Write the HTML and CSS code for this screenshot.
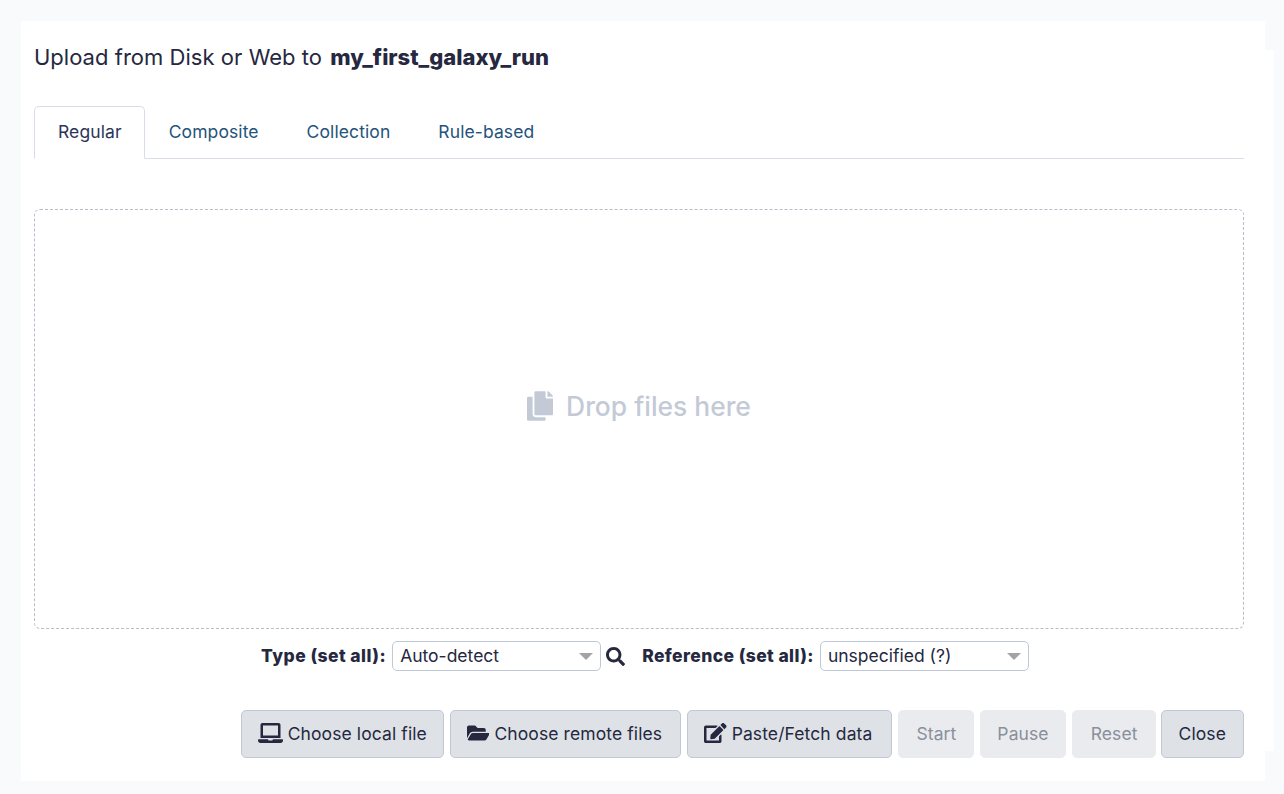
FILE: index.html
```html
<!DOCTYPE html>
<html lang="en">
<head>
<meta charset="utf-8">
<title>Upload from Disk or Web</title>
<link rel="stylesheet" href="styles.css">
</head>
<body>
<main class="panel">
  <h1 class="title">Upload from Disk or Web to <b>my_first_galaxy_run</b></h1>
  <nav class="tabs">
    <a class="tab active">Regular</a>
    <a class="tab">Composite</a>
    <a class="tab">Collection</a>
    <a class="tab">Rule-based</a>
  </nav>
  <section class="drop">
    <svg class="drop-icon" viewBox="0 0 448 512"><path d="M320 448v40c0 13.255-10.745 24-24 24H24c-13.255 0-24-10.745-24-24V120c0-13.255 10.745-24 24-24h72v296c0 30.879 25.121 56 56 56h168zm0-344V0H152c-13.255 0-24 10.745-24 24v368c0 13.255 10.745 24 24 24h272c13.255 0 24-10.745 24-24V128H344c-13.2 0-24-10.8-24-24zm120.971-31.029L375.029 7.029A24 24 0 0 0 358.059 0H352v96h96v-6.059a24 24 0 0 0-7.029-16.97z"/></svg>
    <span>Drop files here</span>
  </section>
  <div class="settings">
    <label class="set-label">Type (set all):</label>
    <div class="select"><span>Auto-detect</span><i class="caret"></i></div>
    <svg class="search" viewBox="0 0 512 512"><path d="M505 442.7L405.3 343c-4.5-4.5-10.6-7-17-7H372c27.6-35.3 44-79.7 44-128C416 93.1 322.9 0 208 0S0 93.1 0 208s93.1 208 208 208c48.3 0 92.7-16.4 128-44v16.3c0 6.4 2.5 12.5 7 17l99.7 99.7c9.4 9.4 24.6 9.4 33.9 0l28.3-28.3c9.4-9.4 9.4-24.6.1-34zM208 336c-70.7 0-128-57.2-128-128 0-70.7 57.2-128 128-128 70.7 0 128 57.2 128 128 0 70.7-57.2 128-128 128z"/></svg>
    <label class="set-label ref">Reference (set all):</label>
    <div class="select"><span>unspecified (?)</span><i class="caret"></i></div>
  </div>
  <div class="actions">
    <button class="btn btn-local" type="button"><svg class="ico" viewBox="0 0 640 512"><path d="M624 416H381.54c-.74 19.81-14.71 32-32.74 32H288c-18.69 0-33.02-17.47-32.77-32H16c-8.8 0-16 7.2-16 16v16c0 35.2 28.8 64 64 64h512c35.2 0 64-28.8 64-64v-16c0-8.8-7.2-16-16-16zM576 48c0-26.4-21.6-48-48-48H112C85.6 0 64 21.6 64 48v336h512V48zm-64 272H128V64h384v256z"/></svg>Choose local file</button>
    <button class="btn btn-remote" type="button"><svg class="ico" viewBox="0 0 576 512"><path d="M572.694 292.093L500.27 416.248A63.997 63.997 0 0 1 444.989 448H45.025c-18.523 0-30.064-20.093-20.731-36.093l72.424-124.155A64 64 0 0 1 152 256h399.964c18.523 0 30.064 20.093 20.73 36.093zM152 224h328v-48c0-26.51-21.49-48-48-48H272l-64-64H48C21.49 64 0 85.49 0 112v278.046l69.077-118.418C86.214 242.25 117.989 224 152 224z"/></svg>Choose remote files</button>
    <button class="btn btn-paste" type="button"><svg class="ico" viewBox="0 0 576 512"><path d="M402.6 83.2l90.2 90.2c3.8 3.8 3.8 10 0 13.8L274.4 405.6l-92.8 10.3c-12.4 1.4-22.9-9.1-21.5-21.5l10.3-92.8L388.8 83.2c3.8-3.8 10-3.8 13.8 0zm162-22.9l-48.8-48.8c-15.2-15.2-39.9-15.2-55.2 0l-35.4 35.4c-3.8 3.8-3.8 10 0 13.8l90.2 90.2c3.8 3.8 10 3.8 13.8 0l35.4-35.4c15.2-15.3 15.2-40 0-55.2zM384 346.2V448H64V128h229.8c3.2 0 6.2-1.3 8.5-3.5l40-40c7.6-7.6 2.2-20.5-8.5-20.5H48C21.5 64 0 85.5 0 112v352c0 26.5 21.5 48 48 48h352c26.5 0 48-21.5 48-48V306.2c0-10.7-12.9-16-20.5-8.5l-40 40c-2.2 2.3-3.5 5.3-3.5 8.5z"/></svg>Paste/Fetch data</button>
    <button class="btn plain disabled" type="button">Start</button>
    <button class="btn plain disabled btn-pause" type="button">Pause</button>
    <button class="btn plain disabled btn-reset" type="button">Reset</button>
    <button class="btn plain" type="button">Close</button>
  </div>
</main>
</body>
</html>
```
FILE: styles.css
```css
* { box-sizing: border-box; }
html, body { margin: 0; height: 100%; }
body {
  background: #f8fafc;
  font-family: Inter, "Liberation Sans", sans-serif;
  font-size: 17.5px;
  color: #25283f;
  overflow: hidden;
}
.panel {
  position: relative;
  width: 1244px;
  height: 760px;
  margin: 21px 0 0 21px;
  padding: 21px 21px 0 13px;
  background: #fff;
  display: flex;
  flex-direction: column;
}
.panel::after {
  content: "";
  position: absolute;
  left: 100%;
  top: 29px;
  width: 9px;
  height: 701px;
  background: #fff;
}
.title {
  margin: 0;
  font-size: 22px;
  font-weight: 400;
  line-height: 30px;
  height: 30px;
  word-spacing: 0.15px;
}
.title b { font-weight: 800; margin-left: 2px; }
.tabs {
  display: flex;
  margin-top: 34px;
  height: 53px;
  border-bottom: 1px solid #d8dee8;
}
.tab {
  height: 53px;
  padding: 0 23px;
  line-height: 50px;
  letter-spacing: 0.1px;
  color: #25537b;
  border: 1px solid transparent;
  border-radius: 5px 5px 0 0;
}
.tab.active {
  padding-right: 22px;
  color: #2c3558;
  background: #fff;
  border-color: #d8dee8 #d8dee8 #fff;
}
.drop {
  margin-top: 50px;
  height: 420px;
  padding-bottom: 26px;
  border: 1px dashed #b8bec9;
  border-radius: 6px;
  display: flex;
  align-items: center;
  justify-content: center;
  gap: 13px;
  color: #c3cad6;
  font-size: 26.4px;
  font-weight: 500;
}
.drop-icon { width: 26px; height: 30px; fill: #c3cad6; }
.settings {
  margin-top: 12px;
  display: flex;
  align-items: center;
  justify-content: center;
  height: 30px;
  padding-left: 12px;
}
.set-label { font-weight: 800; letter-spacing: 0.45px; margin-right: 6px; padding-bottom: 1px; }
.set-label.ref { margin-left: 17px; letter-spacing: 0.4px; }
.select {
  width: 209px;
  height: 30px;
  padding: 0 7px 2px;
  display: flex;
  align-items: center;
  justify-content: space-between;
  background: #fff;
  border: 1px solid #bfc8d6;
  border-radius: 5px;
}
.caret {
  margin-top: 2px;
  border-style: solid;
  border-width: 7px 7.5px 0;
  border-color: #a3a3a3 transparent transparent;
}
.search { width: 19px; height: 19px; margin-left: 5px; fill: #25283f; }
.actions {
  margin-top: 39px;
  display: flex;
  justify-content: flex-end;
  gap: 6px;
}
.btn {
  height: 48px;
  padding: 0 17px 2px 16px;
  display: flex;
  align-items: center;
  font: inherit;
  letter-spacing: 0.1px;
  color: #25283f;
  background: #dee2e6;
  border: 1px solid #bfc8d6;
  border-radius: 5px;
}
.btn.btn-local { padding-right: 16px; }
.btn.btn-remote { padding-right: 18px; }
.btn.btn-paste { padding-right: 19px; }
.btn.plain { padding-left: 17px; }
.btn.btn-pause { padding-left: 16px; padding-right: 16px; }
.btn.btn-reset { padding-left: 18px; padding-right: 17px; margin-right: -1px; }
.btn.disabled {
  color: #8a8f9a;
  background: #e9ebef;
  border-color: #e9ebef;
}
.ico { height: 20px; width: auto; margin-right: 5px; fill: #25283f; }
```
